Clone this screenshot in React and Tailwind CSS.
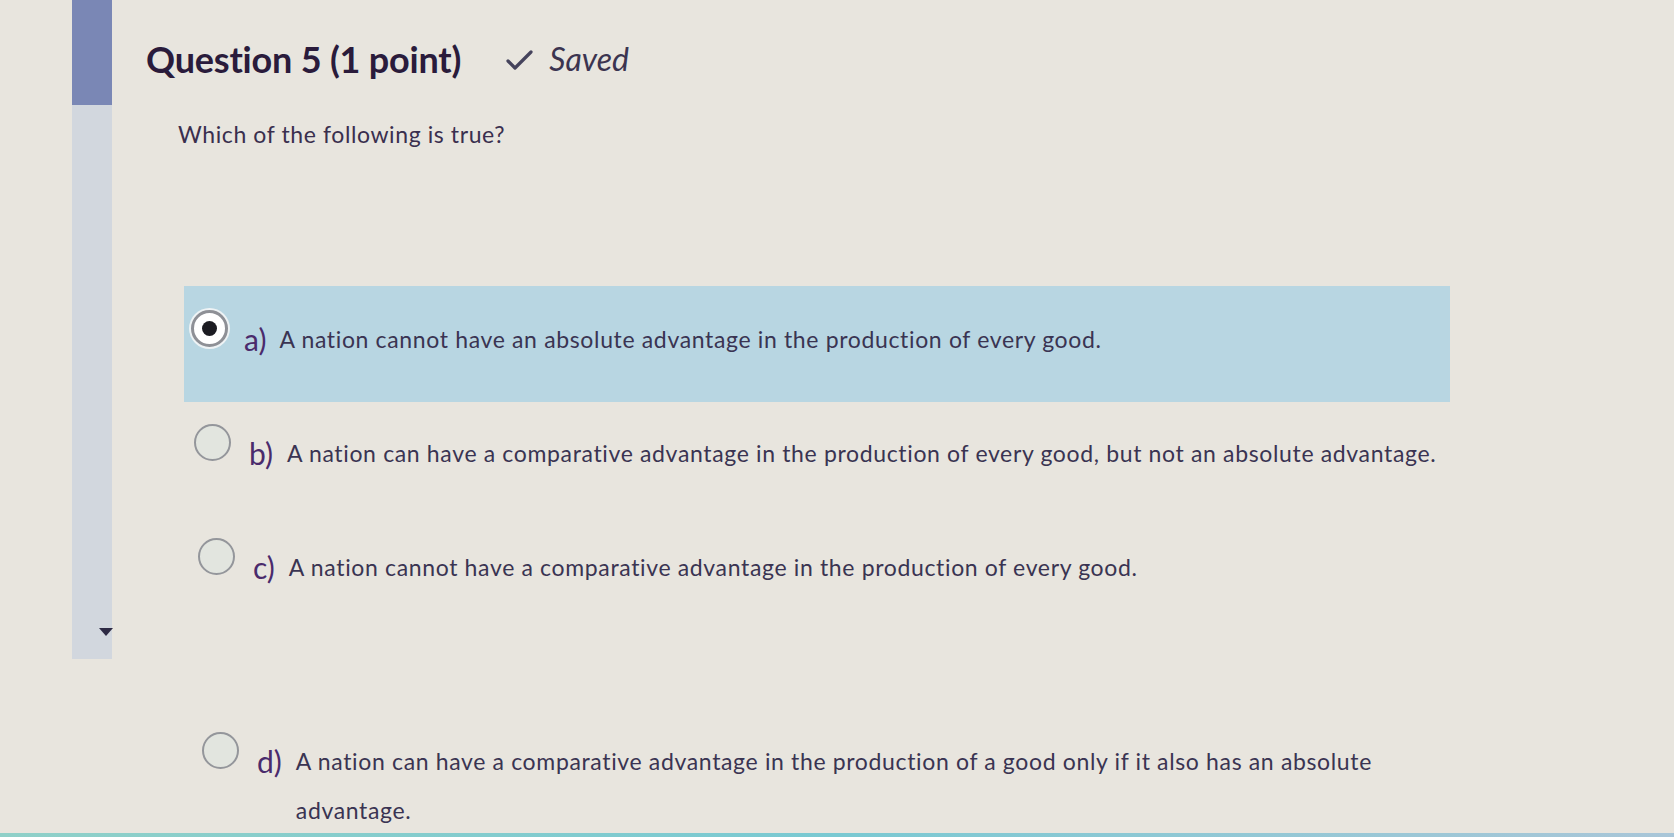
import React from 'react';

const font = { fontFamily: 'Lato, "Open Sans", sans-serif' };

const Radio = ({ checked }) => (
  <div
    className={`w-[37px] h-[37px] rounded-full flex items-center justify-center shrink-0 ${
      checked ? 'bg-white border-[3px] border-[#8e9096] shadow-[0_0_0_2px_#eef3f5]' : 'bg-[#e2e5df] border-2 border-[#94969b]'
    }`}
  >
    {checked && <div className="w-[15px] h-[15px] rounded-full bg-[#1c1c22]" />}
  </div>
);

const Option = ({ letter, text, checked, radioGap, labelGap, maxW = '' }) => (
  <div className="flex items-start">
    <div className="h-[49px] flex items-start -mt-[5px]">
      <Radio checked={checked} />
    </div>
    <div className={`h-[49px] flex items-center text-[30px] text-[#4a2b6c] ${radioGap}`}>{letter}</div>
    <div className={`text-[23px] tracking-[0.65px] leading-[49px] text-[#3a3452] ${maxW} ${labelGap}`}>{text}</div>
  </div>
);

export default function App() {
  return (
    <div className="relative w-full h-[837px] bg-[#e8e5de] overflow-hidden flex" style={font}>
      <div className="w-[72px] shrink-0" />
      <div className="w-[40px] shrink-0 flex flex-col">
        <div className="h-[105px] bg-[#7a87b5]" />
        <div className="h-[554px] bg-[#d2d7de] flex flex-col items-start justify-end pl-[26px] pb-[22px]">
          <svg width="16" height="10" viewBox="0 0 16 10">
            <path d="M1 1 L15 1 L8 9 Z" fill="#2d2a44" />
          </svg>
        </div>
      </div>

      <div className="flex flex-col pl-[34px] pt-[36px]">
        <div className="h-[46px] shrink-0 flex items-center">
          <h1 className="text-[36px] font-bold text-[#2a1b3b] tracking-[-0.2px]">Question 5 (1 point)</h1>
          <svg className="ml-[44px] mt-[2px]" width="28" height="21" viewBox="0 0 28 21">
            <path d="M3 11 L10 18 L26 2" fill="none" stroke="#45435c" strokeWidth="3.2" strokeLinecap="round" strokeLinejoin="round" />
          </svg>
          <span className="ml-[16px] text-[32px] italic text-[#3b3450]">Saved</span>
        </div>

        <p className="shrink-0 mt-[37px] ml-[32px] h-[30px] leading-[30px] text-[23px] tracking-[0.6px] text-[#3a2f4e]">Which of the following is true?</p>

        <div className="shrink-0 mt-[137px] ml-[38px] w-[1266px] h-[116px] bg-[#b8d6e2] flex items-center pl-[7px] pb-[10px]">
          <Option
            checked
            letter="a)"
            radioGap="ml-[16px]"
            labelGap="ml-[13px]"
            text="A nation cannot have an absolute advantage in the production of every good."
          />
        </div>

        <div className="shrink-0 mt-[27px] ml-[48px]">
          <Option
            letter="b)"
            radioGap="ml-[18px]"
            labelGap="ml-[14px]"
            text="A nation can have a comparative advantage in the production of every good, but not an absolute advantage."
          />
        </div>

        <div className="shrink-0 mt-[65px] ml-[52px]">
          <Option
            letter="c)"
            radioGap="ml-[18px]"
            labelGap="ml-[14px]"
            text="A nation cannot have a comparative advantage in the production of every good."
          />
        </div>

        <div className="shrink-0 mt-[145px] ml-[56px]">
          <Option
            letter="d)"
            radioGap="ml-[18px]"
            labelGap="ml-[14px]"
            maxW="max-w-[1100px]"
            text="A nation can have a comparative advantage in the production of a good only if it also has an absolute advantage."
          />
        </div>
      </div>

      <div className="absolute left-0 right-0 bottom-0 h-[4px] bg-gradient-to-r from-[#8fd0c8] via-[#79c9d2] to-[#a9c6d8]" />
    </div>
  );
}
